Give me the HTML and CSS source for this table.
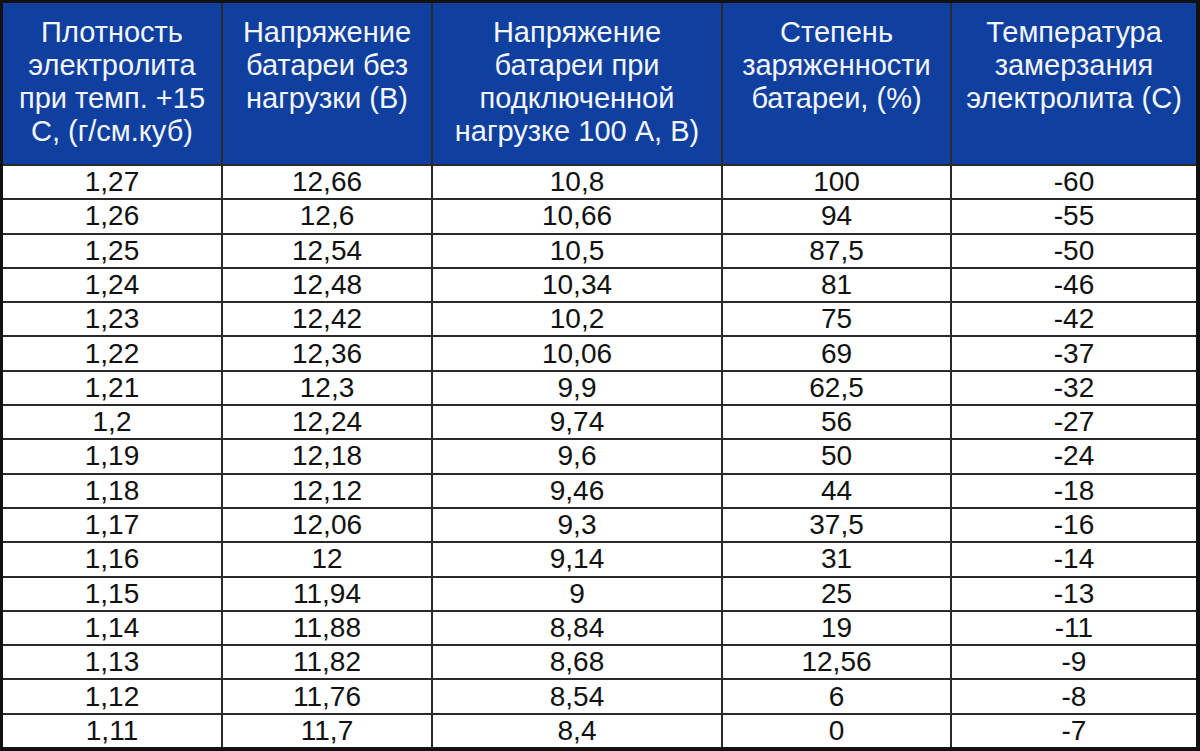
FILE: index.html
```html
<!DOCTYPE html>
<html lang="ru">
<head>
<meta charset="utf-8">
<title>Таблица плотности электролита</title>
<link rel="stylesheet" href="styles.css">
</head>
<body>
<div class="table">
  <div class="th">Плотность<br>электролита<br>при темп. +15<br>С, (г/см.куб)</div>
  <div class="th">Напряжение<br>батареи без<br>нагрузки (В)</div>
  <div class="th">Напряжение<br>батареи при<br>подключенной<br>нагрузке 100 А, В)</div>
  <div class="th">Степень<br>заряженности<br>батареи, (%)</div>
  <div class="th">Температура<br>замерзания<br>электролита (С)</div>

  <div class="td">1,27</div><div class="td">12,66</div><div class="td">10,8</div><div class="td">100</div><div class="td">-60</div>
  <div class="td">1,26</div><div class="td">12,6</div><div class="td">10,66</div><div class="td">94</div><div class="td">-55</div>
  <div class="td">1,25</div><div class="td">12,54</div><div class="td">10,5</div><div class="td">87,5</div><div class="td">-50</div>
  <div class="td">1,24</div><div class="td">12,48</div><div class="td">10,34</div><div class="td">81</div><div class="td">-46</div>
  <div class="td">1,23</div><div class="td">12,42</div><div class="td">10,2</div><div class="td">75</div><div class="td">-42</div>
  <div class="td">1,22</div><div class="td">12,36</div><div class="td">10,06</div><div class="td">69</div><div class="td">-37</div>
  <div class="td">1,21</div><div class="td">12,3</div><div class="td">9,9</div><div class="td">62,5</div><div class="td">-32</div>
  <div class="td">1,2</div><div class="td">12,24</div><div class="td">9,74</div><div class="td">56</div><div class="td">-27</div>
  <div class="td">1,19</div><div class="td">12,18</div><div class="td">9,6</div><div class="td">50</div><div class="td">-24</div>
  <div class="td">1,18</div><div class="td">12,12</div><div class="td">9,46</div><div class="td">44</div><div class="td">-18</div>
  <div class="td">1,17</div><div class="td">12,06</div><div class="td">9,3</div><div class="td">37,5</div><div class="td">-16</div>
  <div class="td">1,16</div><div class="td">12</div><div class="td">9,14</div><div class="td">31</div><div class="td">-14</div>
  <div class="td">1,15</div><div class="td">11,94</div><div class="td">9</div><div class="td">25</div><div class="td">-13</div>
  <div class="td">1,14</div><div class="td">11,88</div><div class="td">8,84</div><div class="td">19</div><div class="td">-11</div>
  <div class="td">1,13</div><div class="td">11,82</div><div class="td">8,68</div><div class="td">12,56</div><div class="td">-9</div>
  <div class="td">1,12</div><div class="td">11,76</div><div class="td">8,54</div><div class="td">6</div><div class="td">-8</div>
  <div class="td">1,11</div><div class="td">11,7</div><div class="td">8,4</div><div class="td">0</div><div class="td">-7</div>
</div>
</body>
</html>
```

FILE: styles.css
```css
html, body {
  margin: 0;
  padding: 0;
  background: #ffffff;
}

.table {
  box-sizing: border-box;
  width: 1200px;
  height: 751px;
  border-style: solid;
  border-color: #111111;
  border-width: 3px 4px 4px 3px;
  background: #2a2a2a;
  display: grid;
  grid-template-columns: 218px 208px 288px 227px 244px;
  grid-template-rows: 161px repeat(17, 1fr);
  gap: 2px;
  font-family: "Liberation Sans", Arial, sans-serif;
}

.th {
  background: #0f3f9f;
  color: #f4f6fb;
  font-size: 29px;
  line-height: 33px;
  text-align: center;
  padding-top: 13px;
  white-space: nowrap;
}

.td {
  background: #ffffff;
  color: #111111;
  font-size: 28px;
  display: flex;
  align-items: center;
  justify-content: center;
}
```
